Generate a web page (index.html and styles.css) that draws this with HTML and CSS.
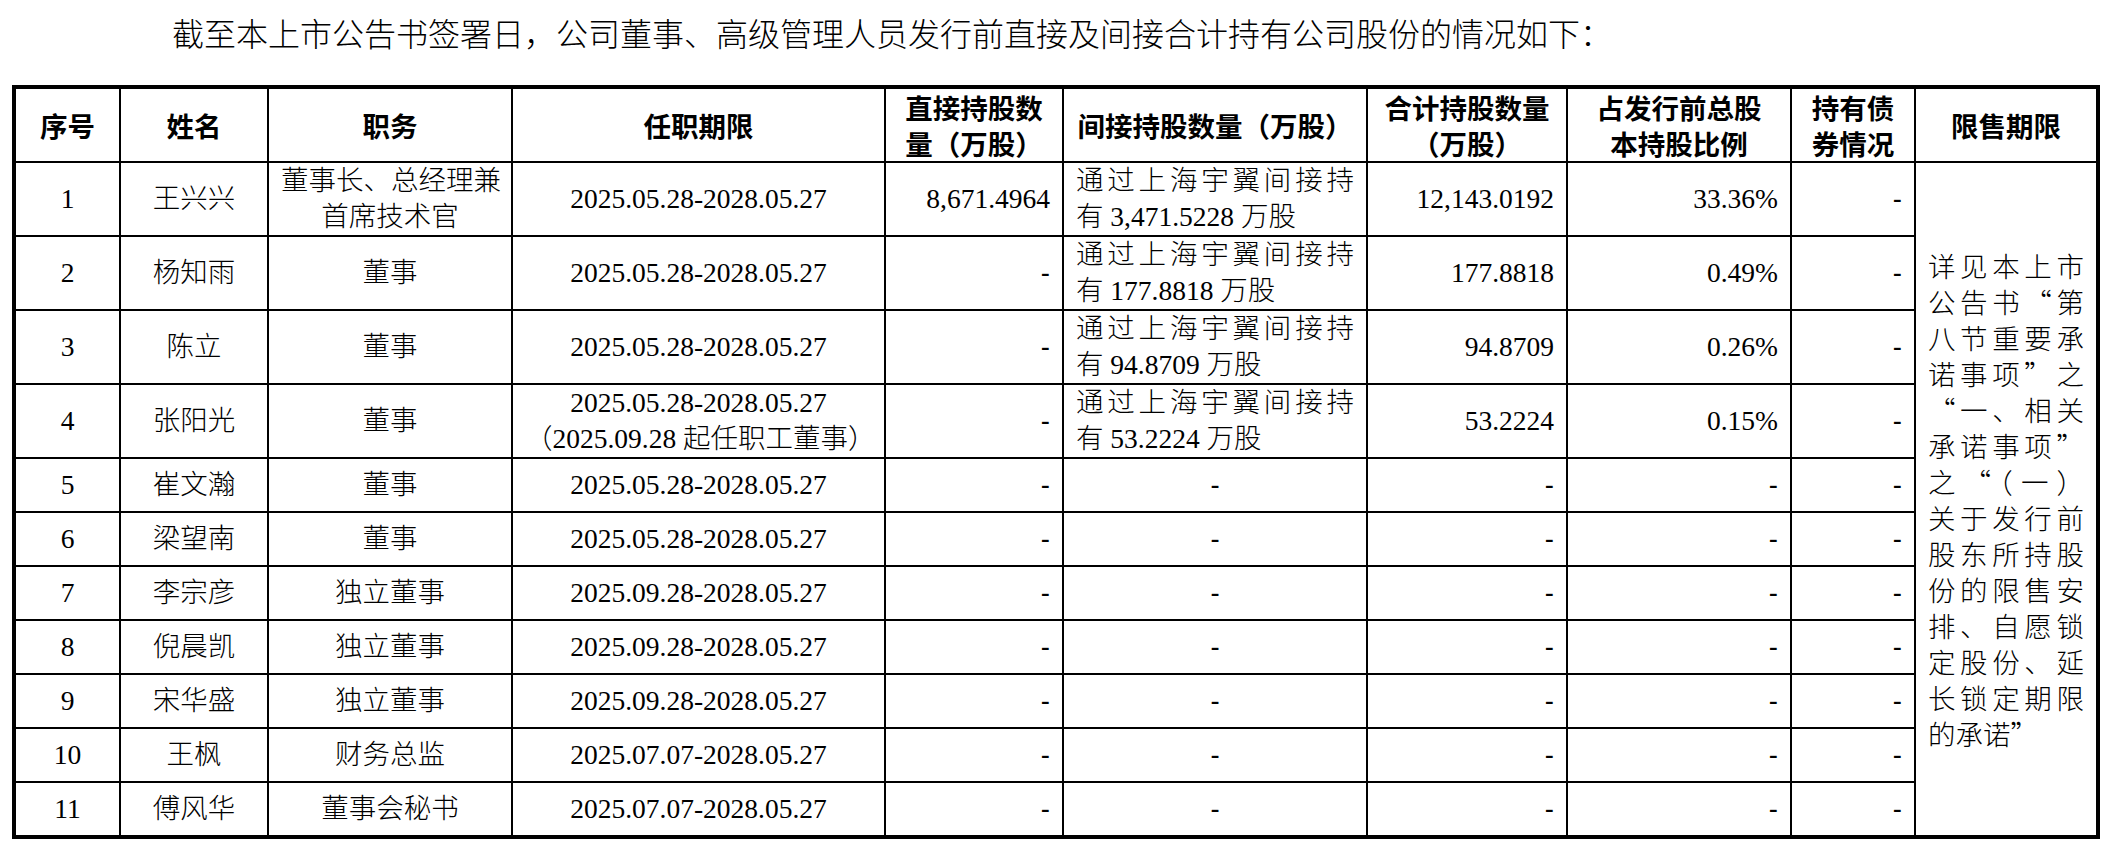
FILE: index.html
```html
<!DOCTYPE html>
<html lang="zh-CN">
<head>
<meta charset="utf-8">
<title>董事、高级管理人员持股情况</title>
<link rel="stylesheet" href="styles.css">
</head>
<body>
<div class="page">
  <p class="intro">截至本上市公告书签署日，公司董事、高级管理人员发行前直接及间接合计持有公司股份的情况如下：</p>
  <table class="grid">
    <colgroup>
      <col class="c1"><col class="c2"><col class="c3"><col class="c4"><col class="c5">
      <col class="c6"><col class="c7"><col class="c8"><col class="c9"><col class="c10">
    </colgroup>
    <thead>
      <tr class="r-hd">
        <th>序号</th>
        <th>姓名</th>
        <th>职务</th>
        <th>任职期限</th>
        <th>直接持股数<br>量（万股）</th>
        <th>间接持股数量（万股）</th>
        <th>合计持股数量<br>（万股）</th>
        <th>占发行前总股<br>本持股比例</th>
        <th>持有债<br>券情况</th>
        <th class="end">限售期限</th>
      </tr>
    </thead>
    <tbody>
      <tr class="r-tall">
        <td class="ctr">1</td>
        <td class="ctr">王兴兴</td>
        <td class="ctr">董事长、总经理兼<br>首席技术官</td>
        <td class="ctr date">2025.05.28-2028.05.27</td>
        <td class="num">8,671.4964</td>
        <td class="ind"><span class="jl">通过上海宇翼间接持</span><span class="ll">有 3,471.5228 万股</span></td>
        <td class="num">12,143.0192</td>
        <td class="num">33.36%</td>
        <td class="num dash">-</td>
        <td class="lock end" rowspan="11">
          <span class="jl">详见本上市</span>
          <span class="jl">公告书“第</span>
          <span class="jl">八节重要承</span>
          <span class="jl">诺事项”之</span>
          <span class="jl">“一、相关</span>
          <span class="jl">承诺事项”</span>
          <span class="jl">之“（一）</span>
          <span class="jl">关于发行前</span>
          <span class="jl">股东所持股</span>
          <span class="jl">份的限售安</span>
          <span class="jl">排、自愿锁</span>
          <span class="jl">定股份、延</span>
          <span class="jl">长锁定期限</span>
          <span class="ll">的承诺”</span>
        </td>
      </tr>
      <tr class="r-tall">
        <td class="ctr">2</td>
        <td class="ctr">杨知雨</td>
        <td class="ctr">董事</td>
        <td class="ctr date">2025.05.28-2028.05.27</td>
        <td class="num dash">-</td>
        <td class="ind"><span class="jl">通过上海宇翼间接持</span><span class="ll">有 177.8818 万股</span></td>
        <td class="num">177.8818</td>
        <td class="num">0.49%</td>
        <td class="num dash">-</td>
      </tr>
      <tr class="r-tall">
        <td class="ctr">3</td>
        <td class="ctr">陈立</td>
        <td class="ctr">董事</td>
        <td class="ctr date">2025.05.28-2028.05.27</td>
        <td class="num dash">-</td>
        <td class="ind"><span class="jl">通过上海宇翼间接持</span><span class="ll">有 94.8709 万股</span></td>
        <td class="num">94.8709</td>
        <td class="num">0.26%</td>
        <td class="num dash">-</td>
      </tr>
      <tr class="r-tall">
        <td class="ctr">4</td>
        <td class="ctr">张阳光</td>
        <td class="ctr">董事</td>
        <td class="ctr date">2025.05.28-2028.05.27<br>（2025.09.28 起任职工董事）</td>
        <td class="num dash">-</td>
        <td class="ind"><span class="jl">通过上海宇翼间接持</span><span class="ll">有 53.2224 万股</span></td>
        <td class="num">53.2224</td>
        <td class="num">0.15%</td>
        <td class="num dash">-</td>
      </tr>
      <tr class="r-short">
        <td class="ctr">5</td>
        <td class="ctr">崔文瀚</td>
        <td class="ctr">董事</td>
        <td class="ctr date">2025.05.28-2028.05.27</td>
        <td class="num dash">-</td>
        <td class="ctr dash">-</td>
        <td class="num dash">-</td>
        <td class="num dash">-</td>
        <td class="num dash">-</td>
      </tr>
      <tr class="r-short">
        <td class="ctr">6</td>
        <td class="ctr">梁望南</td>
        <td class="ctr">董事</td>
        <td class="ctr date">2025.05.28-2028.05.27</td>
        <td class="num dash">-</td>
        <td class="ctr dash">-</td>
        <td class="num dash">-</td>
        <td class="num dash">-</td>
        <td class="num dash">-</td>
      </tr>
      <tr class="r-short">
        <td class="ctr">7</td>
        <td class="ctr">李宗彦</td>
        <td class="ctr">独立董事</td>
        <td class="ctr date">2025.09.28-2028.05.27</td>
        <td class="num dash">-</td>
        <td class="ctr dash">-</td>
        <td class="num dash">-</td>
        <td class="num dash">-</td>
        <td class="num dash">-</td>
      </tr>
      <tr class="r-short">
        <td class="ctr">8</td>
        <td class="ctr">倪晨凯</td>
        <td class="ctr">独立董事</td>
        <td class="ctr date">2025.09.28-2028.05.27</td>
        <td class="num dash">-</td>
        <td class="ctr dash">-</td>
        <td class="num dash">-</td>
        <td class="num dash">-</td>
        <td class="num dash">-</td>
      </tr>
      <tr class="r-short">
        <td class="ctr">9</td>
        <td class="ctr">宋华盛</td>
        <td class="ctr">独立董事</td>
        <td class="ctr date">2025.09.28-2028.05.27</td>
        <td class="num dash">-</td>
        <td class="ctr dash">-</td>
        <td class="num dash">-</td>
        <td class="num dash">-</td>
        <td class="num dash">-</td>
      </tr>
      <tr class="r-short">
        <td class="ctr">10</td>
        <td class="ctr">王枫</td>
        <td class="ctr">财务总监</td>
        <td class="ctr date">2025.07.07-2028.05.27</td>
        <td class="num dash">-</td>
        <td class="ctr dash">-</td>
        <td class="num dash">-</td>
        <td class="num dash">-</td>
        <td class="num dash">-</td>
      </tr>
      <tr class="r-last">
        <td class="ctr">11</td>
        <td class="ctr">傅风华</td>
        <td class="ctr">董事会秘书</td>
        <td class="ctr date">2025.07.07-2028.05.27</td>
        <td class="num dash">-</td>
        <td class="ctr dash">-</td>
        <td class="num dash">-</td>
        <td class="num dash">-</td>
        <td class="num dash">-</td>
      </tr>
    </tbody>
  </table>
</div>
</body>
</html>
```

FILE: styles.css
```css
* {
  box-sizing: border-box;
}

html, body {
  margin: 0;
  padding: 0;
  background: #ffffff;
  color: #000000;
}

body {
  font-family: "Liberation Serif", "Noto Sans CJK SC", serif;
}

.page {
  padding: 0 12px;
}

.intro {
  margin: 0;
  height: 64px;
  line-height: 64px;
  padding-left: 160px;
  font-family: "Noto Sans CJK SC", sans-serif;
  font-size: 32px;
  font-weight: 300;
  white-space: nowrap;
}

.grid {
  margin-top: 21px;
  width: 2088px;
  border: 4px solid #000000;
  border-collapse: separate;
  border-spacing: 0;
  table-layout: fixed;
  font-size: 27.5px;
}

.c1 { width: 105px; }
.c2 { width: 148px; }
.c3 { width: 244px; }
.c4 { width: 373px; }
.c5 { width: 178px; }
.c6 { width: 304px; }
.c7 { width: 200px; }
.c8 { width: 224px; }
.c9 { width: 124px; }
.c10 { width: 180px; }

.r-hd { height: 74px; }
.r-tall { height: 74px; }
.r-short { height: 54px; }
.r-last { height: 52px; }

.grid th,
.grid td {
  border-right: 2px solid #000000;
  border-bottom: 2px solid #000000;
  padding: 0 12px;
  vertical-align: middle;
  line-height: 36px;
  white-space: nowrap;
}

.grid th {
  font-family: "Noto Sans CJK SC", sans-serif;
  font-weight: 700;
  text-align: center;
}

.grid td {
  font-weight: 300;
}

.grid .end {
  border-right: none;
}

.r-last td,
.grid td.lock {
  border-bottom: none;
}

.ctr {
  text-align: center;
}

.date {
  padding: 0 6px;
}

.num {
  text-align: right;
  padding-right: 15px;
}

.dash {
  font-family: "Liberation Sans", sans-serif;
}

.ind {
  padding: 0 14px 0 13px;
}

.jl {
  display: block;
  text-align: justify;
  text-align-last: justify;
}

.ll {
  display: block;
  text-align: left;
}

.lock {
  padding: 0 12px 0 15px;
  line-height: 41.5px;
  white-space: normal;
  font-family: "Noto Sans CJK SC", sans-serif;
}
```
